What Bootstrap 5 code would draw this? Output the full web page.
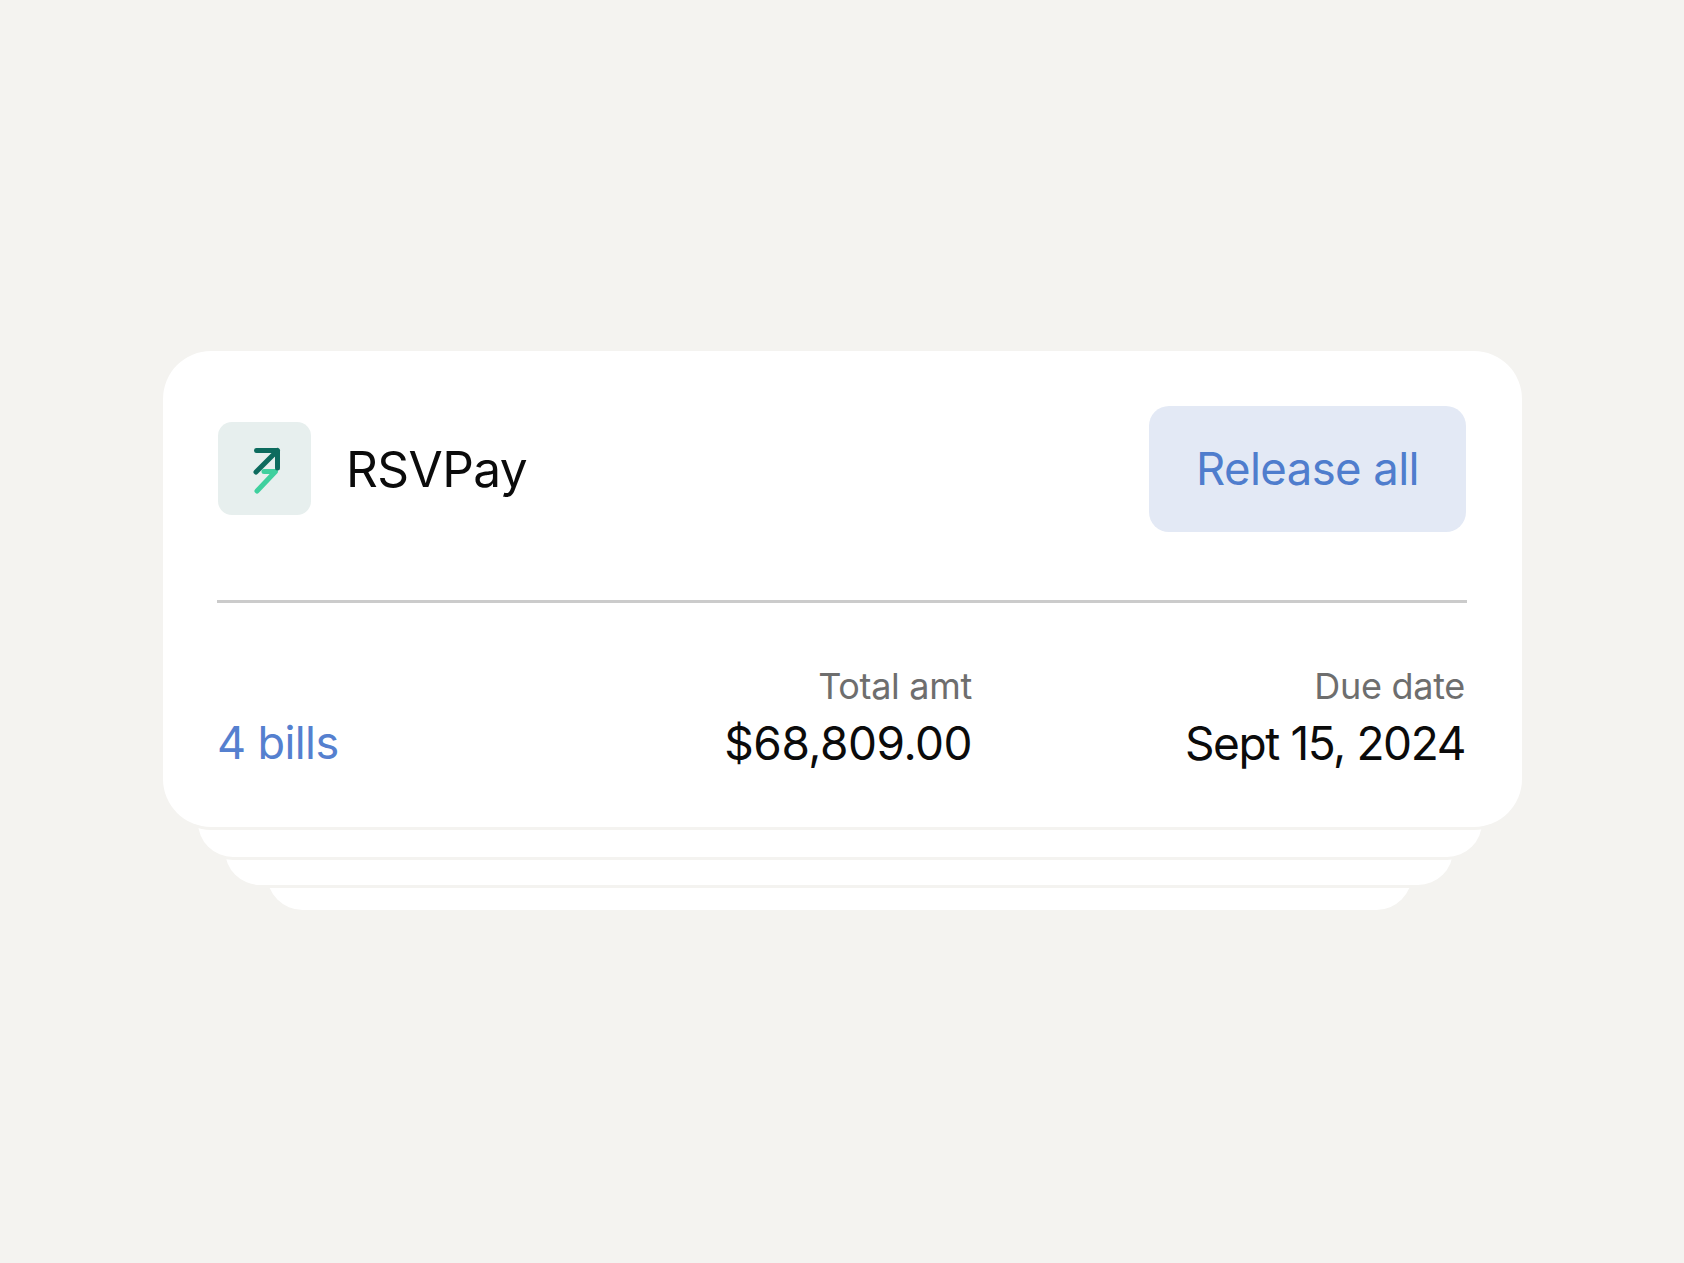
<!DOCTYPE html>
<html lang="en">
<head>
    <meta charset="UTF-8">
    <meta name="viewport" content="width=device-width, initial-scale=1.0">
    <title>RSVPay bills</title>
    <link href="https://cdn.jsdelivr.net/npm/bootstrap@5.3.0/dist/css/bootstrap.min.css" rel="stylesheet">
<style>
    body {
        background-color: #f4f3f0;
        font-family: Inter, "Liberation Sans", sans-serif;
        min-height: 1263px;
    }

    /* Stack Of Cards */
    .bill-stack {
        width: 1359px;
        margin-left: 163px;
        padding-top: 351px;
    }

    .bill-card {
        border: 0;
        border-radius: 48px;
        height: 476px;
        padding: 55px 55px 0 54px;
        z-index: 4;
        box-shadow: 0 3px 0 #f4f3f0;
    }

    .stack-layer {
        background-color: #fff;
        border-radius: 44px;
        height: 70px;
        box-shadow: 0 3px 0 #f4f3f0;
    }

    .stack-one { margin: -40px 40px 0 35px; z-index: 3; }
    .stack-two { margin: -42px 69px 0 62px; z-index: 2; }
    .stack-three { margin: -46px 110px 0 104px; z-index: 1; box-shadow: none; height: 71px; }

    /* Header Row */
    .vendor-logo {
        width: 93px;
        height: 93px;
        background-color: #e7efee;
        border-radius: 14px;
        margin-left: 1px;
        margin-bottom: 2px;
    }

    .vendor-name {
        font-size: 49.6px;
        color: #0b0b0b;
        margin-left: 35px;
        letter-spacing: -0.6px;
    }

    .release-btn {
        width: 317px;
        height: 126px;
        margin-right: 1px;
        background-color: #e3e9f5;
        color: #4f7dcd;
        border: 0;
        border-radius: 20px;
        font-size: 45.5px;
        letter-spacing: -0.6px;
    }

    .release-btn:hover {
        background-color: #d8e0f1;
        color: #4f7dcd;
    }

    .bill-divider {
        margin: 68px 0 0;
        border-top: 3px solid #cbcbcb;
        opacity: 1;
    }

    /* Details Row */
    .bill-details {
        margin-top: 61px;
        margin-right: 2px;
    }

    .bill-count {
        font-size: 45px;
        color: #5580cf;
        line-height: 56px;
        letter-spacing: -0.6px;
    }

    .detail-label {
        font-size: 36px;
        color: #6e6e6e;
        line-height: 44px;
        margin-bottom: 7px;
        letter-spacing: -0.3px;
    }

    .detail-value {
        font-size: 46px;
        color: #0b0b0b;
        line-height: 56px;
        letter-spacing: -0.5px;
    }

    .due-col {
        width: 493px;
    }

    .due-col .detail-value {
        letter-spacing: -1.4px;
    }
</style>
</head>
<body>

    <div class="bill-stack d-flex flex-column">
        <div class="card bill-card">
            <div class="d-flex align-items-center justify-content-between">
                <div class="d-flex align-items-center">
                    <div class="vendor-logo d-flex align-items-center justify-content-center">
                        <svg width="93" height="93" viewBox="0 0 93 93" fill="none" stroke-width="5" stroke-linecap="round" stroke-linejoin="round">
                            <path d="M46 49.5 H57.5 L39 69" stroke="#3fd09e"/>
                            <path d="M38.5 28.5 H59.5 V46 M59.5 28.5 L38 50" stroke="#0d6b5e"/>
                        </svg>
                    </div>
                    <div class="vendor-name">RSVPay</div>
                </div>
                <button type="button" class="btn release-btn">Release all</button>
            </div>

            <hr class="bill-divider">

            <div class="bill-details d-flex align-items-end">
                <div class="bill-count">4 bills</div>
                <div class="flex-grow-1 text-end">
                    <div class="detail-label">Total amt</div>
                    <div class="detail-value">$68,809.00</div>
                </div>
                <div class="due-col text-end">
                    <div class="detail-label">Due date</div>
                    <div class="detail-value">Sept 15, 2024</div>
                </div>
            </div>
        </div>
        <div class="stack-layer stack-one"></div>
        <div class="stack-layer stack-two"></div>
        <div class="stack-layer stack-three"></div>
    </div>

    <script src="https://cdn.jsdelivr.net/npm/bootstrap@5.3.0/dist/js/bootstrap.bundle.min.js"></script>
</body>
</html>
